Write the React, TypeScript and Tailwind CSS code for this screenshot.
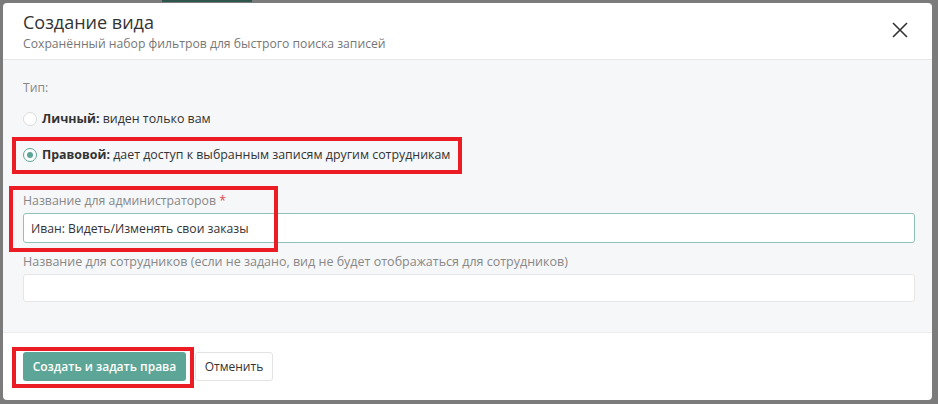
import React from 'react';

const font = { fontFamily: '"Open Sans", "Noto Sans", sans-serif' };

function Radio({ checked }: { checked?: boolean }) {
  return (
    <span
      className={
        'flex h-[14px] w-[14px] shrink-0 items-center justify-center rounded-full border bg-white ' +
        (checked ? 'border-[#5ca597]' : 'border-[#dcdcdc]')
      }
    >
      {checked && <span className="h-[6px] w-[6px] rounded-full bg-[#5ca597]" />}
    </span>
  );
}

export default function App() {
  return (
    <div className="relative h-[404px] w-[938px] overflow-hidden bg-[#7b7b7b]" style={font}>
      {/* background page showing through the overlay */}
      <div className="absolute left-[162px] top-0 h-[2px] w-[90px] bg-[#2f564c]" />

      <div className="ml-[3px] mt-[3px] flex h-[397px] w-[929px] flex-col overflow-hidden rounded-[4px] bg-white">
        {/* Header */}
        <div className="flex h-[57px] items-start justify-between border-b border-[#e6e6e6] pl-[20px] pr-[24px] pt-[7px]">
          <div>
            <h3 className="text-[18px] leading-[25px] text-[#333]">Создание вида</h3>
            <p className="text-[12.2px] leading-[18px] text-[#777]">
              Сохранённый набор фильтров для быстрого поиска записей
            </p>
          </div>
          <button className="mt-[12px] text-[#333]">
            <svg width="16" height="16" viewBox="0 0 16 16" fill="none" stroke="currentColor" strokeWidth="1.6">
              <path d="M1 1L15 15M15 1L1 15" />
            </svg>
          </button>
        </div>

        {/* Body */}
        <div className="flex h-[272px] flex-col bg-[#f6f7f9] pl-[20px] pr-[17px] pt-[19px]">
          <div className="text-[12.2px] leading-[18px] text-[#888]">Тип:</div>

          <label className="mt-[13px] flex items-center gap-[5px] text-[12.4px] leading-[18px] text-[#333]">
            <Radio />
            <span>
              <b className="font-bold">Личный:</b> виден только вам
            </span>
          </label>

          <label className="mt-[18px] flex items-center gap-[5px] text-[12.4px] leading-[18px] text-[#333]">
            <Radio checked />
            <span>
              <b className="font-bold">Правовой:</b> дает доступ к выбранным записям другим сотрудникам
            </span>
          </label>

          <div className="mt-[28px] text-[12.3px] leading-[18px] text-[#888]">
            Название для администраторов <span className="text-[#e0474c]">*</span>
          </div>
          <input
            readOnly
            value="Иван: Видеть/Изменять свои заказы"
            className="mt-[3px] h-[30px] w-full rounded-[3px] border border-[#8fc2b6] bg-white px-[7px] text-[12.2px] text-[#333] outline-none"
            style={font}
          />

          <div className="mt-[10px] text-[12.5px] leading-[18px] text-[#888]">
            Название для сотрудников (если не задано, вид не будет отображаться для сотрудников)
          </div>
          <input
            readOnly
            className="mt-[3px] h-[28px] w-full rounded-[3px] border border-[#e6e6e6] bg-white px-[7px] text-[12.2px] outline-none"
          />
        </div>

        {/* Footer */}
        <div className="flex gap-[9px] border-t border-[#ececec] px-[20px] pt-[19px]">
          <button className="h-[29px] w-[163px] rounded-[3px] bg-[#5ca597] text-[12px] font-semibold text-white">
            Создать и задать права
          </button>
          <button className="h-[29px] w-[78px] rounded-[3px] border border-[#e3e3e3] bg-white text-[12px] text-[#333]">
            Отменить
          </button>
        </div>
      </div>

      {/* red annotation frames */}
      <div className="pointer-events-none absolute left-[12px] top-[137px] h-[37px] w-[450px] border-4 border-[#ec1c24]" />
      <div className="pointer-events-none absolute left-[9px] top-[186px] h-[66px] w-[269px] border-4 border-[#ec1c24]" />
      <div className="pointer-events-none absolute left-[12px] top-[347px] h-[41px] w-[182px] border-4 border-[#ec1c24]" />
    </div>
  );
}
